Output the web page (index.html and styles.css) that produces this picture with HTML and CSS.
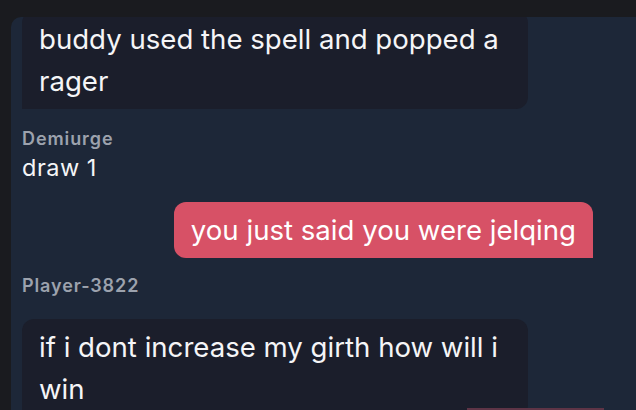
FILE: index.html
```html
<!DOCTYPE html>
<html lang="en">
<head>
    <meta charset="UTF-8">
    <meta name="viewport" content="width=device-width, initial-scale=1.0">
    <title>Chat</title>
    <link rel="stylesheet" href="styles.css">
</head>
<body>
    <div class="app">
        <div class="chat">
            <div class="messages">
                <div class="bubble theirs">buddy used the spell and popped a rager</div>

                <div class="sender">Demiurge</div>
                <div class="plain">draw 1</div>

                <div class="bubble mine">you just said you were jelqing</div>

                <div class="sender sender-gap">Player-3822</div>
                <div class="bubble theirs">if i dont increase my girth how will i win</div>
            </div>
            <div class="peek"></div>
        </div>
    </div>
</body>
</html>
```

FILE: styles.css
```css
* {
    margin: 0;
    padding: 0;
    box-sizing: border-box;
    font-family: 'Inter', 'Roboto', sans-serif;
}

body {
    background: #1a1b1f;
    color: #f5f5f7;
    height: 100vh;
    overflow: hidden;
}

.app {
    height: 100vh;
    padding-top: 17px;
    padding-left: 11px;
}

.chat {
    position: relative;
    height: 100%;
    background: #1d2738;
    border-top-left-radius: 10px;
    overflow: hidden;
}

/* scrolled list, first bubble is cut by the top */
.messages {
    display: flex;
    flex-direction: column;
    align-items: flex-start;
    margin-top: -6px;
    padding: 0 43px 0 11px;
}

.bubble {
    font-size: 27.6px;
    line-height: 42px;
    padding: 7px 17px;
    border-radius: 12px;
}

.theirs {
    max-width: 506px;
    background: #1b1e2b;
    border-bottom-left-radius: 0;
}

.mine {
    align-self: flex-end;
    margin-top: 18px;
    background: #d75166;
    color: #fff;
    border-bottom-right-radius: 0;
}

.sender {
    margin-top: 19px;
    font-size: 18px;
    line-height: 22px;
    font-weight: 600;
    letter-spacing: 0.9px;
    color: #9ca2ad;
}

.sender-gap {
    margin-top: 17px;
    margin-bottom: 22px;
}

.plain {
    margin-top: 2px;
    font-size: 23.5px;
    line-height: 32px;
    letter-spacing: 0.5px;
}

.peek {
    position: absolute;
    left: 456px;
    top: 391px;
    width: 137px;
    height: 20px;
    background: #5e3446;
}
```
